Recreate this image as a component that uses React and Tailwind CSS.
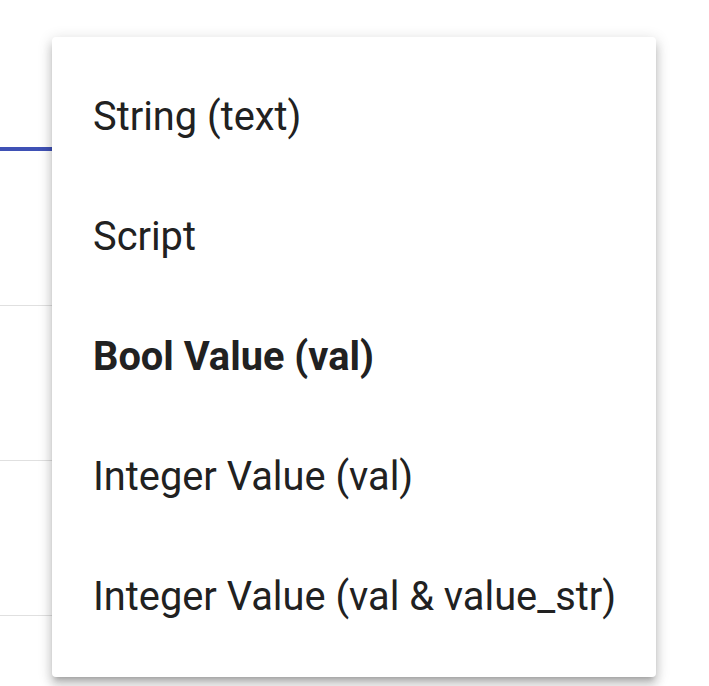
import React from "react";

const items = [
  { label: "String (text)", bold: false },
  { label: "Script", bold: false },
  { label: "Bool Value (val)", bold: true },
  { label: "Integer Value (val)", bold: false },
  { label: "Integer Value (val & value_str)", bold: false },
];

export default function App() {
  return (
    <div className="relative w-[709px] h-[686px] bg-white overflow-hidden" style={{ fontFamily: "Roboto, 'Noto Sans', sans-serif" }}>
      <div className="flex flex-col w-[400px]">
        <div className="h-[147px]" />
        <div className="h-[4px] bg-[#3f51b5]" />
        <div className="h-[155px] border-b border-[#e0e0e0]" />
        <div className="h-[155px] border-b border-[#e0e0e0]" />
        <div className="h-[155px] border-b border-[#e0e0e0]" />
      </div>
      <div className="absolute left-[52px] top-[37px] w-[604px] rounded-[4px] bg-white py-[20px] shadow-[0_5px_5px_-3px_rgba(0,0,0,0.2),0_8px_10px_1px_rgba(0,0,0,0.14),0_3px_14px_2px_rgba(0,0,0,0.12)]">
        {items.map((it) => (
          <div
            key={it.label}
            className={`h-[120px] flex items-center pl-[41px] text-[39.8px] text-[#212121] ${it.bold ? "font-bold" : "font-normal"}`}
          >
            {it.label}
          </div>
        ))}
      </div>
    </div>
  );
}
